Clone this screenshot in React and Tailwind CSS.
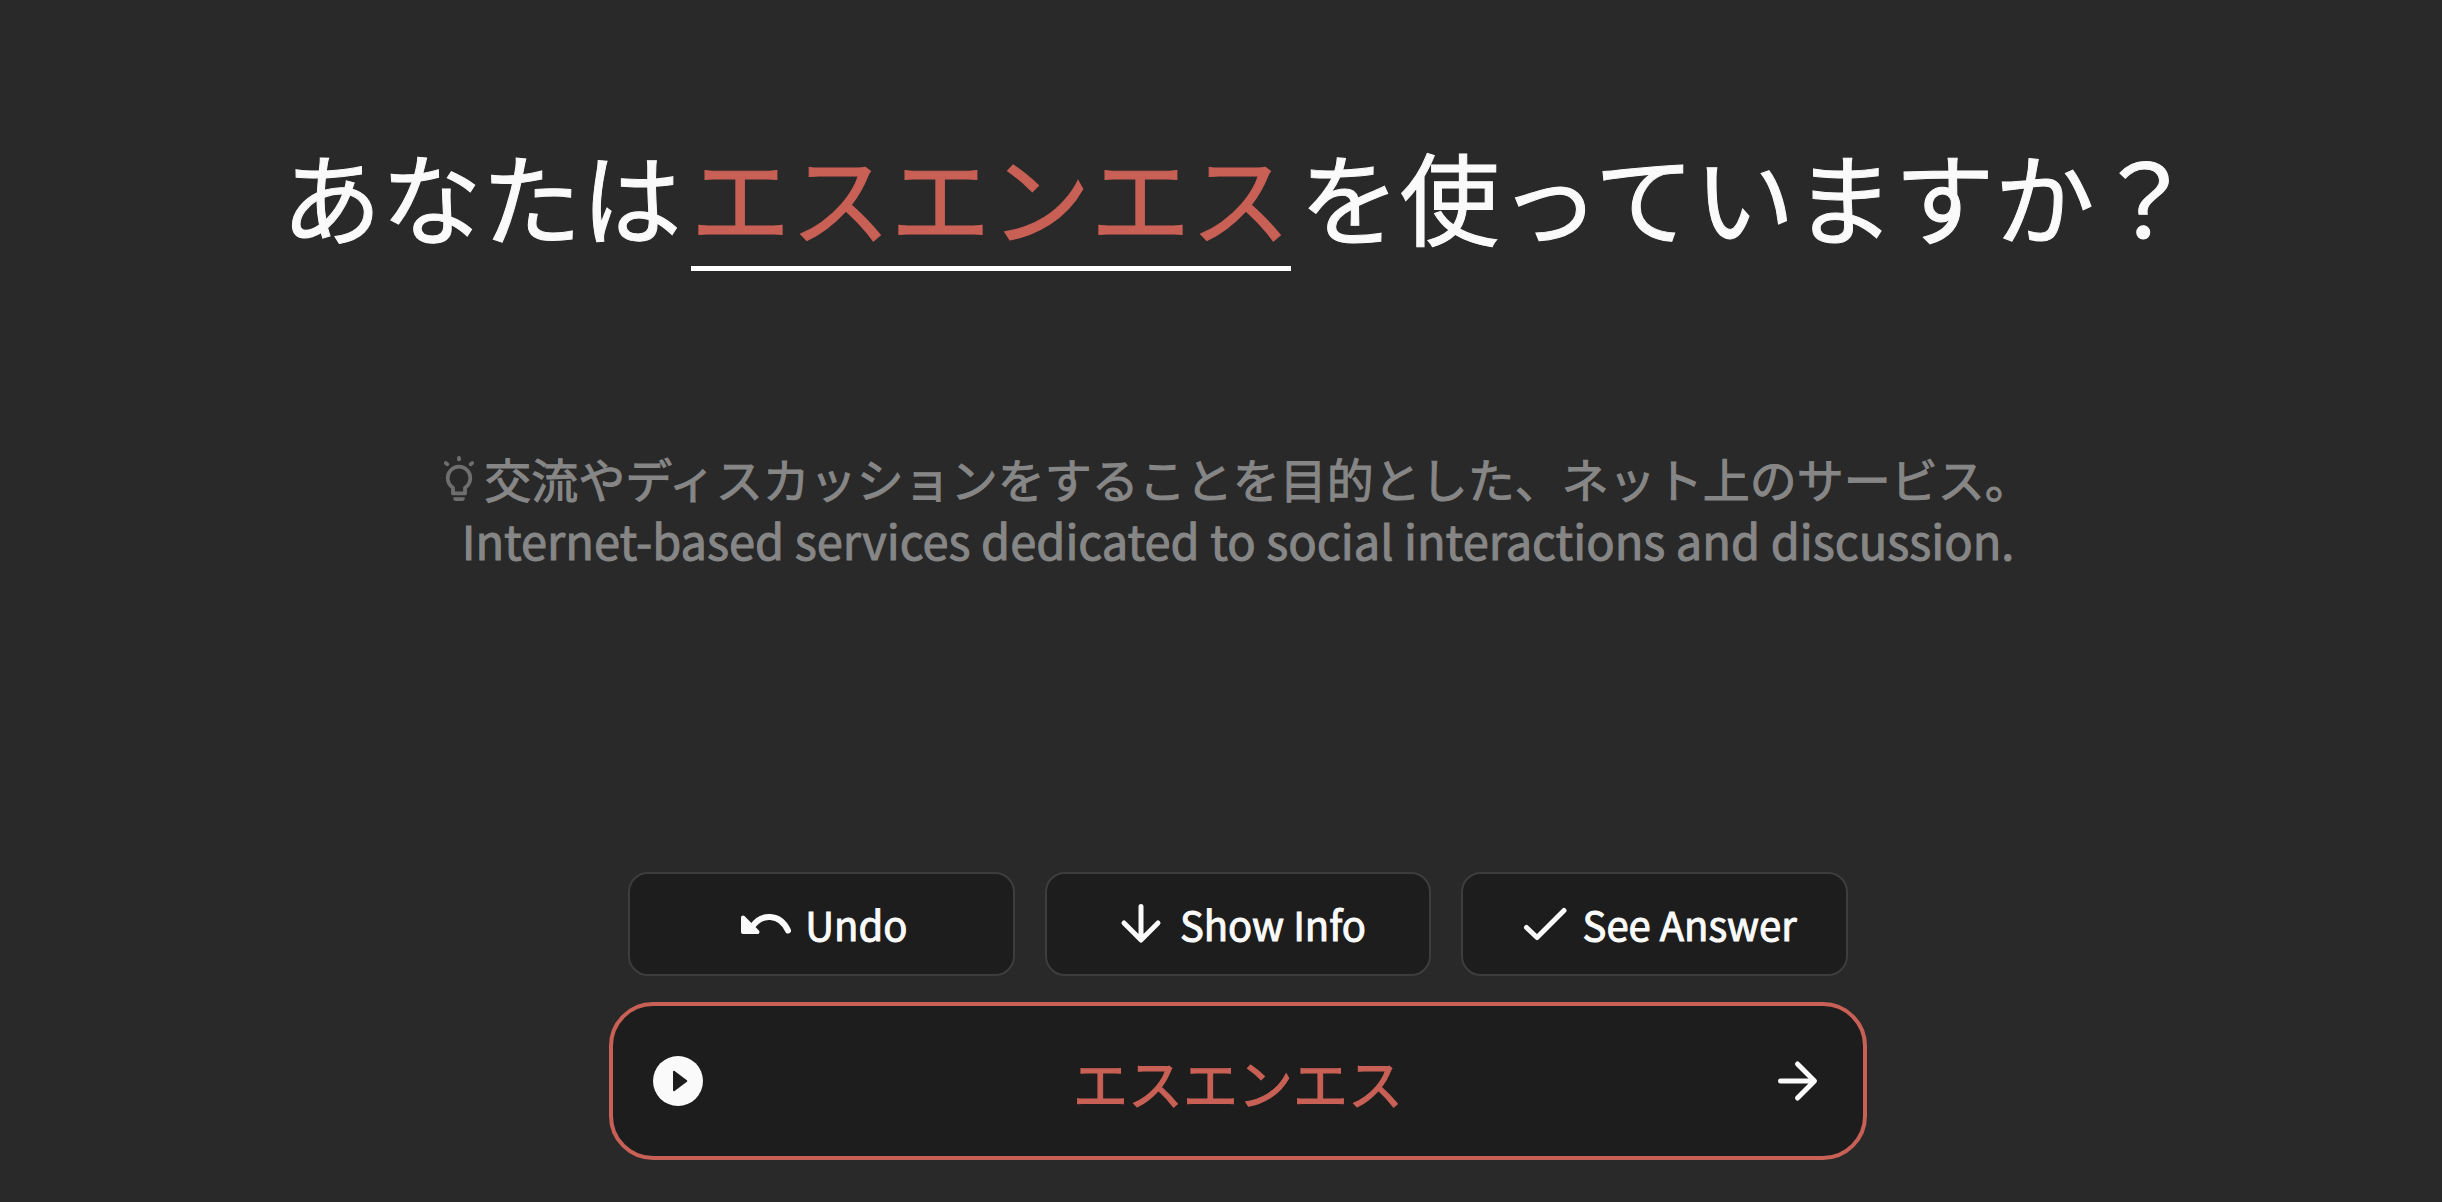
import React from "react";

function Bulb() {
  return (
    <svg aria-hidden="true" className="h-[46px] w-[30px] shrink-0 text-[#6e6e6e]" viewBox="0 0 30 46" fill="none" stroke="currentColor" strokeWidth="3.8">
      <path d="M15 2.8v1.6M1.9 8.1l1.4 1.2M28.1 8.1l-1.4 1.2" strokeLinecap="round" />
      <path d="M9 38.4V32.8C5.8 30.6 3.7 27.2 3.7 23a11.300 11.300 0 0 1 22.600 0c0 4.200-2.100 7.600-5.300 9.800v5.600z" strokeLinejoin="round" />
      <path d="M9.300 42.200h11.400v1a2.700 2.700 0 0 1-2.700 2.700h-6a2.700 2.700 0 0 1-2.700-2.700z" fill="currentColor" stroke="none" />
    </svg>
  );
}

function Icon({ children }) {
  return (
    <svg aria-hidden="true" className="size-[50px] shrink-0" viewBox="0 0 50 50" fill="none" stroke="currentColor" strokeWidth="5" strokeLinecap="round" strokeLinejoin="round">
      {children}
    </svg>
  );
}

function Action({ icon, label }) {
  return (
    <button type="button" className="flex h-[104px] items-center justify-center gap-[14px] rounded-[20px] border-2 border-[#3d3d3d] bg-[#1d1d1d] pl-[6px] text-[40px]">
      <Icon>{icon}</Icon>
      <span>{label}</span>
    </button>
  );
}

const undo = (
  <>
    <path d="M11 28C20 14 39 14 47 31.500" strokeWidth="6" />
    <path d="M2 18.500 16.500 33 H2z" fill="currentColor" strokeWidth="4" />
  </>
);
const down = <path d="M25 7.500V40.500M8 24l17 17 17-17" />;
const check = <path d="M7.500 28.500l10.500 10L45 11.500" />;

export default function App() {
  return (
    <main lang="ja" className="flex min-h-screen flex-col items-center bg-[#292929] pb-[42px] pl-[34px] font-['Noto_Sans_CJK_JP',sans-serif] text-[#fafafa] [-webkit-text-stroke:1px]">
      <h1 className="mt-[124px] flex text-[100px] leading-[142px]">
        <span>あなたは</span>
        <span className="mx-[9px] border-b-5 border-white text-[#c86055]">エスエンエス</span>
        <span>を使っていますか？</span>
      </h1>
      <div className="mt-[176px] flex flex-col items-center text-[47px] leading-[62px] text-[#868686]">
        <p className="flex items-center gap-[10px]">
          <Bulb />
          交流やディスカッションをすることを目的とした、ネット上のサービス。
        </p>
        <p lang="en">Internet-based services dedicated to social interactions and discussion.</p>
      </div>
      <div className="mt-[301px] grid w-full max-w-[1220px] grid-cols-3 gap-[30px]">
        <Action icon={undo} label="Undo" />
        <Action icon={down} label="Show Info" />
        <Action icon={check} label="See Answer" />
      </div>
      <form className="mt-[26px] flex h-[158px] w-full max-w-[1258px] items-center rounded-[44px] border-4 border-[#c86055] bg-[#1d1d1d] px-10">
        <button type="button" aria-label="Play audio">
          <svg aria-hidden="true" className="size-[50px]" viewBox="0 0 50 50">
            <circle cx="25" cy="25" r="25" fill="currentColor" />
            <path d="M21 15.700v18.600L33.300 25z" fill="#1d1d1d" stroke="#1d1d1d" strokeWidth="2" strokeLinejoin="round" />
          </svg>
        </button>
        <input type="text" aria-label="Answer" defaultValue="エスエンエス" className="min-w-0 flex-1 bg-transparent text-center text-[55px] text-[#c86055] outline-none" />
        <button type="button" aria-label="Next">
          <Icon>
            <path d="M7.500 25H41M24.500 8l17 17-17 17" />
          </Icon>
        </button>
      </form>
    </main>
  );
}
